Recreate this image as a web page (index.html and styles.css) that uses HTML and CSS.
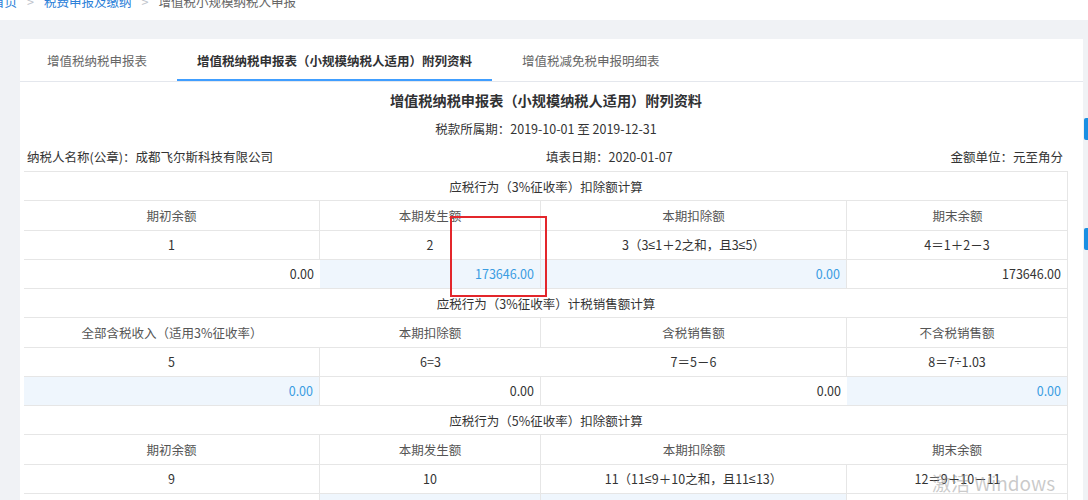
FILE: index.html
```html
<!DOCTYPE html>
<html lang="zh-CN">
<head>
<meta charset="utf-8">
<title>增值税小规模纳税人申报</title>
<link rel="stylesheet" href="styles.css">
</head>
<body>
<div class="topbar">
  <div class="crumb">
    <a class="crumb-link">首页</a><span class="sep">&gt;</span><a class="crumb-link">税费申报及缴纳</a><span class="sep">&gt;</span><span class="crumb-cur">增值税小规模纳税人申报</span>
  </div>
</div>
<div class="main">
  <div class="card">
    <div class="tabs">
      <div class="tab">增值税纳税申报表</div>
      <div class="tab active">增值税纳税申报表（小规模纳税人适用）附列资料</div>
      <div class="tab">增值税减免税申报明细表</div>
    </div>
    <div class="body">
      <h1 class="title">增值税纳税申报表（小规模纳税人适用）附列资料</h1>
      <div class="period">税款所属期：2019-10-01 至 2019-12-31</div>
      <div class="info">
        <div class="info-left">纳税人名称(公章)：成都飞尔斯科技有限公司</div>
        <div class="info-right"><span>填表日期：2020-01-07</span><span>金额单位：元至角分</span></div>
      </div>
      <div class="grid">
        <div class="sec">应税行为（3%征收率）扣除额计算</div>
        <div class="c hd">期初余额</div><div class="c hd">本期发生额</div><div class="c hd">本期扣除额</div><div class="c hd">期末余额</div>
        <div class="c">1</div><div class="c">2</div><div class="c">3（3<span class="m">≤</span>1＋2之和，且3<span class="m">≤</span>5）</div><div class="c">4＝1＋2－3</div>
        <div class="c v">0.00</div><div class="c v edit">173646.00</div><div class="c v edit">0.00</div><div class="c v">173646.00</div>

        <div class="sec">应税行为（3%征收率）计税销售额计算</div>
        <div class="c hd">全部含税收入（适用3%征收率）</div><div class="c hd">本期扣除额</div><div class="c hd">含税销售额</div><div class="c hd">不含税销售额</div>
        <div class="c">5</div><div class="c">6=3</div><div class="c">7＝5－6</div><div class="c">8＝7<span class="m">÷</span>1.03</div>
        <div class="c v edit">0.00</div><div class="c v">0.00</div><div class="c v">0.00</div><div class="c v edit">0.00</div>

        <div class="sec">应税行为（5%征收率）扣除额计算</div>
        <div class="c hd">期初余额</div><div class="c hd">本期发生额</div><div class="c hd">本期扣除额</div><div class="c hd">期末余额</div>
        <div class="c">9</div><div class="c">10</div><div class="c">11（11<span class="m">≤</span>9＋10之和，且11<span class="m">≤</span>13）</div><div class="c">12＝9＋10－11</div>
        <div class="c v">0.00</div><div class="c v edit">0.00</div><div class="c v edit">0.00</div><div class="c v">0.00</div>
      </div>
    </div>
  </div>
</div>
<div class="mark"></div>
<div class="side side-a"></div>
<div class="side side-b"></div>
<div class="watermark">
  <div class="wm-1">激活 Windows</div>
  <div class="wm-2">转到“设置”以激活 Windows。</div>
</div>
</body>
</html>
```
FILE: styles.css
```css
html, body {
  margin: 0;
  padding: 0;
  overflow: hidden;
  height: 100%;
}
body {
  background: #fff;
  font-family: "Noto Sans CJK SC", "Noto Sans", sans-serif;
  font-size: 12.5px;
  color: #333;
  position: relative;
}
.topbar {
  height: 20px;
  background: #fff;
  display: flow-root;
}
.crumb {
  transform: translate(-8px, -8px);
  line-height: 20px;
  white-space: nowrap;
}
.crumb-link {
  color: #2b80d8;
}
.sep {
  color: #c0c4cc;
  margin: 0 10px;
}
.crumb-cur {
  color: #666;
}
.main {
  background: #f0f2f5;
  padding: 19px 5px 0 20px;
  height: 500px;
}
.card {
  background: #fff;
  height: 600px;
}
.tabs {
  display: flex;
  gap: 10px;
  padding-left: 7px;
  height: 42px;
  border-bottom: 1px solid #e4e7ed;
}
.tab {
  padding: 2px 20px 0;
  line-height: 40px;
  color: #666;
  white-space: nowrap;
}
.tab.active {
  color: #303133;
  font-weight: bold;
  box-shadow: inset 0 -2px 0 #409eff;
}
.body {
  padding: 0 15px 0 4px;
}
.title {
  margin: 8px 0 0;
  font-size: 14.2px;
  line-height: 20px;
  font-weight: bold;
  text-align: center;
  color: #303133;
}
.period {
  margin-top: 9px;
  line-height: 20px;
  text-align: center;
}
.info {
  margin-top: 8px;
  line-height: 20px;
  display: grid;
  grid-template-columns: 1fr 1fr;
}
.info-left {
  padding-left: 3px;
}
.info-right {
  display: flex;
  justify-content: space-between;
  padding-right: 5px;
}
.grid {
  margin-top: 4px;
  display: grid;
  grid-template-columns: 296px 221px 306px 221px;
  grid-auto-rows: 29.27px;
  border-top: 1px solid #e6e6e6;
  border-right: 1px solid #e6e6e6;
}
.grid > div {
  box-sizing: border-box;
  border-bottom: 1px solid #e6e6e6;
  display: flex;
  align-items: center;
  justify-content: center;
  white-space: nowrap;
}
.sec {
  grid-column: 1 / -1;
  color: #333;
}
.c {
  border-right: 1px solid #e6e6e6;
}
.c:nth-child(5n) {
  border-right: none;
}
.m {
  font-family: "Liberation Sans", sans-serif;
}
.hd {
  color: #555;
}
.c.v {
  justify-content: flex-end;
  padding-right: 6px;
}
.c.edit {
  background: #eff6fd;
  color: #3a9de2;
}
.mark {
  position: absolute;
  left: 450px;
  top: 216px;
  width: 97px;
  height: 81px;
  box-sizing: border-box;
  border: 2.5px solid #e3262b;
}
.side {
  position: absolute;
  left: 1084px;
  width: 4px;
  height: 22px;
  background: #1a8fe3;
  border-radius: 2px 0 0 2px;
}
.side-a { top: 118px; }
.side-b { top: 228px; }
.watermark {
  position: absolute;
  left: 932px;
  top: 470px;
  color: rgba(150, 150, 150, 0.5);
  white-space: nowrap;
}
.wm-1 {
  font-family: "Noto Sans CJK SC", "Open Sans", sans-serif;
  font-size: 19px;
  line-height: 26px;
}
.wm-2 {
  margin-top: 3px;
  font-size: 13px;
  line-height: 18px;
}
```
